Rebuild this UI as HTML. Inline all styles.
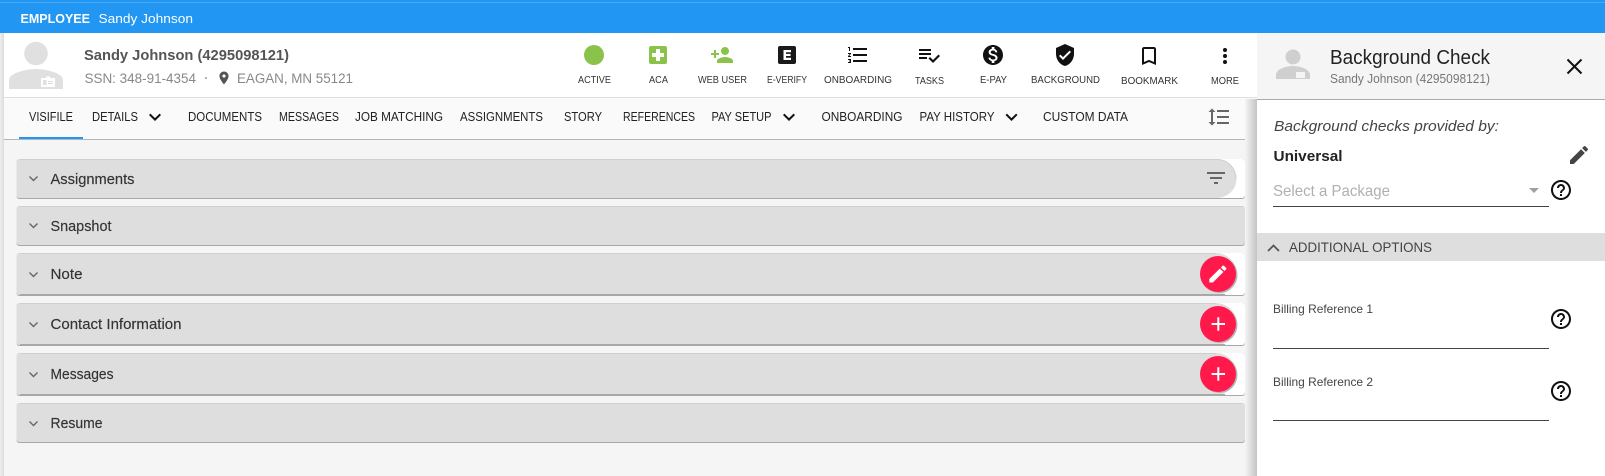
<!DOCTYPE html>
<html lang="en">
<head>
<meta charset="utf-8">
<title>Employee - Sandy Johnson</title>
<style>
html,body{margin:0;padding:0;width:1605px;height:476px;overflow:hidden;background:#f5f5f5}
svg{display:block}
text{font-family:"Liberation Sans",Arial,sans-serif;white-space:pre}
.tab{font-size:12.5px;fill:#222}
.lbl{font-size:10px;fill:#333}
.row{font-size:14.5px;fill:#333;stroke:#333;stroke-width:.15}
.chev{fill:none;stroke:#666;stroke-width:1.4}
</style>
</head>
<body>
<svg width="1605" height="476" viewBox="0 0 1605 476" xmlns="http://www.w3.org/2000/svg">
<defs>
<linearGradient id="sh" x1="0" x2="1" y1="0" y2="0"><stop offset="0" stop-color="#f5f5f5"/><stop offset="1" stop-color="#c4c4c4"/></linearGradient>
<linearGradient id="ls" x1="0" x2="1" y1="0" y2="0"><stop offset="0" stop-color="#eeeeee"/><stop offset="1" stop-color="#dcdcdc"/></linearGradient>
<symbol id="help" viewBox="0 0 24 24" overflow="visible"><path d="M11 18h2v-2h-2v2zm1-16C6.48 2 2 6.48 2 12s4.48 10 10 10 10-4.48 10-10S17.52 2 12 2zm0 18c-4.41 0-8-3.59-8-8s3.59-8 8-8 8 3.59 8 8-3.59 8-8 8zm0-14c-2.21 0-4 1.79-4 4h2c0-1.1.9-2 2-2s2 .9 2 2c0 2-3 1.75-3 5h2c0-2.25 3-2.5 3-5 0-2.21-1.79-4-4-4z"/></symbol>
<symbol id="chevd" viewBox="0 0 24 24"><path d="M16.59 8.59L12 13.17 7.41 8.59 6 10l6 6 6-6z"/></symbol>
</defs>

<!-- base -->
<rect width="1605" height="476" fill="#f5f5f5"/>
<rect x="0" y="33" width="4" height="443" fill="url(#ls)"/>

<!-- top bar -->
<rect width="1605" height="33" fill="#2196f3"/>
<rect y="2" width="1605" height="1" fill="#4aa9f5"/>
<text x="20.5" y="23" font-size="13" font-weight="700" fill="#fff" textLength="69.5" lengthAdjust="spacingAndGlyphs">EMPLOYEE</text>
<text x="98.5" y="23" font-size="13" fill="#fff" textLength="94.5" lengthAdjust="spacingAndGlyphs">Sandy Johnson</text>

<!-- header -->
<rect x="4" y="33" width="1253" height="64" fill="#fff"/>
<rect x="4" y="97" width="1253" height="1" fill="#e0e0e0"/>
<circle cx="36" cy="53.500" r="11.800" fill="#e0e0e0"/>
<path d="M9 89v-8c0-3 1-5 5-7 6-3 14-5 22-5s16 2 22 5c4 2 5 4 5 7v8z" fill="#e0e0e0"/>
<rect x="41" y="78" width="14" height="9" fill="#fff"/>
<rect x="43" y="80" width="3.500" height="5" fill="#e0e0e0"/>
<rect x="48" y="81" width="5" height="1" fill="#e0e0e0"/>
<rect x="48" y="83" width="5" height="1" fill="#e0e0e0"/>
<rect x="46" y="76.500" width="4" height="2" fill="#fff"/>

<text x="84" y="60" font-size="15" font-weight="700" fill="#555" textLength="205" lengthAdjust="spacingAndGlyphs">Sandy Johnson (4295098121)</text>
<text x="84.500" y="83" font-size="13.500" fill="#888" textLength="111.500" lengthAdjust="spacingAndGlyphs">SSN: 348-91-4354</text>
<circle cx="206" cy="78" r="1" fill="#999"/>
<path transform="translate(216.200 70.200) scale(.65)" fill="#555" d="M12 2C8.13 2 5 5.13 5 9c0 5.25 7 13 7 13s7-7.75 7-13c0-3.87-3.13-7-7-7zm0 9.5c-1.38 0-2.5-1.12-2.5-2.5s1.12-2.5 2.5-2.5 2.5 1.12 2.5 2.5-1.12 2.5-2.5 2.5z"/>
<text x="237" y="83" font-size="13.500" fill="#888" textLength="116" lengthAdjust="spacingAndGlyphs">EAGAN, MN 55121</text>

<!-- action icons -->
<circle cx="594" cy="55" r="10" fill="#8bc34a"/>
<text class="lbl" x="578" y="83" textLength="33" lengthAdjust="spacingAndGlyphs">ACTIVE</text>

<rect x="649" y="46" width="18" height="18" rx="2" fill="#8bc34a"/>
<path d="M656 49h4v4h4v4h-4v4h-4v-4h-4v-4h4z" fill="#fff"/>
<text class="lbl" x="649" y="83" textLength="19" lengthAdjust="spacingAndGlyphs">ACA</text>

<path transform="translate(710 43)" fill="#8bc34a" d="M15 12c2.21 0 4-1.79 4-4s-1.79-4-4-4-4 1.79-4 4 1.79 4 4 4zm-9-2V7H4v3H1v2h3v3h2v-3h3v-2H6zm9 4c-2.67 0-8 1.34-8 4v2h16v-2c0-2.66-5.33-4-8-4z"/>
<text class="lbl" x="698" y="83" textLength="49" lengthAdjust="spacingAndGlyphs">WEB USER</text>

<rect x="778" y="46" width="18" height="18" rx="2" fill="#1a1a1a"/>
<path d="M783.500 50h7.500v2.200h-5v1.700h4.500v2.100H786v1.800h5V60h-7.500z" fill="#fff"/>
<text class="lbl" x="767" y="83" textLength="40" lengthAdjust="spacingAndGlyphs">E-VERIFY</text>

<path transform="translate(846 43)" fill="#111" d="M2 17h2v.5H3v1h1v.5H2v1h3v-4H2zm1-9h1V4H2v1h1v3zm-1 3h1.8L2 13.1v.9h3v-1H3.2L5 10.9V10H2v1zm5-6v2h14V5H7zm0 14h14v-2H7v2zm0-6h14v-2H7v2z"/>
<text class="lbl" x="824" y="83" textLength="68" lengthAdjust="spacingAndGlyphs">ONBOARDING</text>

<path transform="translate(917 43)" fill="#111" d="M14 10H2v2h12v-2zm0-4H2v2h12V6zM2 16h8v-2H2v2zm19.500-4.500L23 13l-6.990 7-4.510-4.500L13 14l3.010 3 5.490-5.500z"/>
<text class="lbl" x="915" y="84" textLength="29" lengthAdjust="spacingAndGlyphs">TASKS</text>

<path transform="translate(981 43)" fill="#111" d="M12 2C6.480 2 2 6.480 2 12s4.480 10 10 10 10-4.480 10-10S17.520 2 12 2zm1.410 16.090V20h-2.670v-1.930c-1.710-.36-3.160-1.460-3.270-3.400h1.960c.1 1.050.82 1.870 2.650 1.870 1.960 0 2.400-.98 2.400-1.590 0-.83-.44-1.610-2.670-2.140-2.480-.6-4.180-1.620-4.180-3.670 0-1.720 1.390-2.840 3.110-3.210V4h2.670v1.950c1.860.45 2.790 1.860 2.870 3.390H14.300c-.05-1.110-.64-1.870-2.220-1.870-1.500 0-2.400.68-2.400 1.640 0 .84.65 1.390 2.670 1.910s4.180 1.390 4.180 3.910c-.01 1.830-1.380 2.830-3.120 3.160z"/>
<text class="lbl" x="980" y="83" textLength="27" lengthAdjust="spacingAndGlyphs">E-PAY</text>

<path transform="translate(1053 43)" fill="#111" d="M12 1L3 5v6c0 5.550 3.840 10.740 9 12 5.160-1.260 9-6.450 9-12V5l-9-4zm-2 16l-4-4 1.410-1.410L10 14.170l6.590-6.590L18 9l-8 8z"/>
<text class="lbl" x="1031" y="83" textLength="69" lengthAdjust="spacingAndGlyphs">BACKGROUND</text>

<path transform="translate(1137 44)" fill="#111" d="M17 3H7c-1.100 0-1.990.9-1.990 2L5 21l7-3 7 3V5c0-1.100-.9-2-2-2zm0 15l-5-2.180L7 18V5h10v13z"/>
<text class="lbl" x="1121" y="84" textLength="57" lengthAdjust="spacingAndGlyphs">BOOKMARK</text>

<circle cx="1225" cy="50" r="2" fill="#111"/><circle cx="1225" cy="56" r="2" fill="#111"/><circle cx="1225" cy="62" r="2" fill="#111"/>
<text class="lbl" x="1211" y="84" textLength="28" lengthAdjust="spacingAndGlyphs">MORE</text>

<!-- tab bar -->
<rect x="4" y="98" width="1253" height="41" fill="#fafafa"/>
<rect x="4" y="139" width="1253" height="1" fill="#b5b5b5"/>
<rect x="19" y="137" width="64" height="2" fill="#2196f3"/>
<text class="tab" x="29" y="121" textLength="44" lengthAdjust="spacingAndGlyphs">VISIFILE</text>
<text class="tab" x="92" y="121" textLength="46" lengthAdjust="spacingAndGlyphs">DETAILS</text>
<use href="#chevd" x="143" y="105" width="24" height="24" fill="#111"/>
<text class="tab" x="188" y="121" textLength="74" lengthAdjust="spacingAndGlyphs">DOCUMENTS</text>
<text class="tab" x="279" y="121" textLength="60" lengthAdjust="spacingAndGlyphs">MESSAGES</text>
<text class="tab" x="355" y="121" textLength="88" lengthAdjust="spacingAndGlyphs">JOB MATCHING</text>
<text class="tab" x="460" y="121" textLength="83" lengthAdjust="spacingAndGlyphs">ASSIGNMENTS</text>
<text class="tab" x="564" y="121" textLength="38" lengthAdjust="spacingAndGlyphs">STORY</text>
<text class="tab" x="623" y="121" textLength="72" lengthAdjust="spacingAndGlyphs">REFERENCES</text>
<text class="tab" x="711.500" y="121" textLength="60" lengthAdjust="spacingAndGlyphs">PAY SETUP</text>
<use href="#chevd" x="777" y="105" width="24" height="24" fill="#111"/>
<text class="tab" x="821.500" y="121" textLength="81" lengthAdjust="spacingAndGlyphs">ONBOARDING</text>
<text class="tab" x="919.500" y="121" textLength="75" lengthAdjust="spacingAndGlyphs">PAY HISTORY</text>
<use href="#chevd" x="999.500" y="105" width="24" height="24" fill="#111"/>
<text class="tab" x="1043" y="121" textLength="85" lengthAdjust="spacingAndGlyphs">CUSTOM DATA</text>
<path transform="translate(1207 105)" fill="#666" d="M6 7h2.500L5 3.500 1.500 7H4v10H1.500L5 20.500 8.500 17H6V7zm4-2v2h12V5H10zm0 14h12v-2H10v2zm0-6h12v-2H10v2z"/>

<!-- accordion rows -->
<g>
<rect x="16.500" y="159" width="1228.500" height="40" rx="3" fill="#a8a8a8"/>
<rect x="16.500" y="159" width="1228.500" height="39" rx="3" fill="#fff"/>
<path d="M19.500 159H1217a19.500 19.500 0 0 1 0 39H19.500a3 3 0 0 1-3-3V162a3 3 0 0 1 3-3z" fill="#dedede"/>
<path d="M20 159.500H1217a19 19 0 0 1 19 19" fill="none" stroke="#cfcfcf"/>

<rect x="16.500" y="206" width="1228.500" height="40" rx="3" fill="#a8a8a8"/>
<rect x="16.500" y="206" width="1228.500" height="39" rx="3" fill="#dedede"/>
<rect x="20" y="206" width="1222" height="1" fill="#cfcfcf"/>

<rect x="16.500" y="253" width="1228.500" height="43" rx="3" fill="#a8a8a8"/>
<rect x="16.500" y="253" width="1228.500" height="42" rx="3" fill="#fff"/>
<path d="M19.500 253H1216a21 21 0 0 1 0 42H19.500a3 3 0 0 1-3-3V256a3 3 0 0 1 3-3z" fill="#dedede"/>
<rect x="20" y="294" width="1205" height="1" fill="#a8a8a8"/>
<rect x="20" y="253" width="1196" height="1" fill="#cfcfcf"/>

<rect x="16.500" y="303" width="1228.500" height="43" rx="3" fill="#a8a8a8"/>
<rect x="16.500" y="303" width="1228.500" height="42" rx="3" fill="#fff"/>
<path d="M19.500 303H1216a21 21 0 0 1 0 42H19.500a3 3 0 0 1-3-3V306a3 3 0 0 1 3-3z" fill="#dedede"/>
<rect x="20" y="344" width="1205" height="1" fill="#a8a8a8"/>
<rect x="20" y="303" width="1196" height="1" fill="#cfcfcf"/>

<rect x="16.500" y="353" width="1228.500" height="43" rx="3" fill="#a8a8a8"/>
<rect x="16.500" y="353" width="1228.500" height="42" rx="3" fill="#fff"/>
<path d="M19.500 353H1216a21 21 0 0 1 0 42H19.500a3 3 0 0 1-3-3V356a3 3 0 0 1 3-3z" fill="#dedede"/>
<rect x="20" y="394" width="1205" height="1" fill="#a8a8a8"/>
<rect x="20" y="353" width="1196" height="1" fill="#cfcfcf"/>

<rect x="16.500" y="403" width="1228.500" height="40" rx="3" fill="#a8a8a8"/>
<rect x="16.500" y="403" width="1228.500" height="39" rx="3" fill="#dedede"/>
<rect x="20" y="403" width="1222" height="1" fill="#cfcfcf"/>
</g>

<polyline class="chev" points="29.500,176.500 33.500,180.500 37.500,176.500"/>
<polyline class="chev" points="29.500,223.500 33.500,227.500 37.500,223.500"/>
<polyline class="chev" points="29.500,272.500 33.500,276.500 37.500,272.500"/>
<polyline class="chev" points="29.500,322.500 33.500,326.500 37.500,322.500"/>
<polyline class="chev" points="29.500,372.500 33.500,376.500 37.500,372.500"/>
<polyline class="chev" points="29.500,421.500 33.500,425.500 37.500,421.500"/>

<text class="row" x="50.500" y="184" textLength="84" lengthAdjust="spacingAndGlyphs">Assignments</text>
<text class="row" x="50.500" y="231" textLength="61" lengthAdjust="spacingAndGlyphs">Snapshot</text>
<text class="row" x="50.500" y="279" textLength="32" lengthAdjust="spacingAndGlyphs">Note</text>
<text class="row" x="50.500" y="329" textLength="131" lengthAdjust="spacingAndGlyphs">Contact Information</text>
<text class="row" x="50.500" y="379" textLength="63" lengthAdjust="spacingAndGlyphs">Messages</text>
<text class="row" x="50.500" y="428" textLength="52" lengthAdjust="spacingAndGlyphs">Resume</text>

<path transform="translate(1204 166)" fill="#666" d="M10 18h4v-2h-4v2zM3 6v2h18V6H3zm3 7h12v-2H6v2z"/>

<!-- FABs -->
<circle cx="1219.500" cy="275" r="18" fill="#b4b4b4"/>
<circle cx="1219.500" cy="325" r="18" fill="#b4b4b4"/>
<circle cx="1219.500" cy="375" r="18" fill="#b4b4b4"/>
<circle cx="1218" cy="274" r="18" fill="#ff1a4b"/>
<circle cx="1218" cy="324" r="18" fill="#ff1a4b"/>
<circle cx="1218" cy="374" r="18" fill="#ff1a4b"/>
<path transform="translate(1206.500 262.600) scale(.95)" fill="#fff" d="M3 17.250V21h3.750L17.810 9.940l-3.750-3.750L3 17.250zM20.710 7.040c.39-.39.39-1.020 0-1.410l-2.340-2.340c-.39-.39-1.020-.39-1.410 0l-1.830 1.830 3.750 3.750 1.830-1.830z"/>
<path d="M1217.300 317.300h2v5.700h5.700v2h-5.700v5.700h-2V325h-5.700v-2h5.700z" fill="#fff"/>
<path d="M1217.300 367.300h2v5.700h5.700v2h-5.700v5.700h-2V375h-5.700v-2h5.700z" fill="#fff"/>

<!-- right panel -->
<rect x="1245" y="99" width="12" height="377" fill="url(#sh)"/>
<rect x="1257" y="33" width="348" height="443" fill="#fff"/>
<rect x="1257" y="33" width="348" height="66" fill="#f5f5f5"/>
<rect x="1257" y="99" width="348" height="1" fill="#aaaaaa"/>
<circle cx="1293" cy="57" r="7.500" fill="#cfcfcf"/>
<path d="M1276 79v-4c0-6 10-9 17-9s17 3 17 9v4z" fill="#cfcfcf"/>
<rect x="1296" y="72" width="9" height="6" fill="#f5f5f5"/>
<text x="1330" y="64" font-size="20" fill="#222" textLength="160" lengthAdjust="spacingAndGlyphs">Background Check</text>
<text x="1330" y="83" font-size="12.500" fill="#777" textLength="160" lengthAdjust="spacingAndGlyphs">Sandy Johnson (4295098121)</text>
<path d="M1567.500 59.500l14 14m0-14l-14 14" stroke="#111" stroke-width="2" fill="none"/>

<text x="1274" y="131" font-size="15" font-style="italic" fill="#444" textLength="225" lengthAdjust="spacingAndGlyphs">Background checks provided by:</text>
<text x="1273.500" y="161" font-size="14.500" font-weight="700" fill="#222" textLength="69" lengthAdjust="spacingAndGlyphs">Universal</text>
<path transform="translate(1567 143)" fill="#444" d="M3 17.250V21h3.750L17.810 9.940l-3.750-3.750L3 17.250zM20.710 7.040c.39-.39.39-1.020 0-1.410l-2.340-2.340c-.39-.39-1.020-.39-1.410 0l-1.830 1.830 3.750 3.750 1.830-1.830z"/>
<text x="1273" y="196" font-size="16" fill="#b0b0b0" textLength="117" lengthAdjust="spacingAndGlyphs">Select a Package</text>
<path d="M1529 188h10l-5 5z" fill="#a0a0a0"/>
<rect x="1273" y="206" width="276" height="1" fill="#444"/>
<use href="#help" x="1549" y="178" width="24" height="24" fill="#111"/>

<rect x="1257" y="233" width="348" height="28" fill="#dedede"/>
<path d="M1268 251l5.500-5.500 5.500 5.500" fill="none" stroke="#555" stroke-width="1.800"/>
<text x="1289" y="252" font-size="14" fill="#444" textLength="143" lengthAdjust="spacingAndGlyphs">ADDITIONAL OPTIONS</text>

<text x="1273" y="313" font-size="12" fill="#444" textLength="100" lengthAdjust="spacingAndGlyphs">Billing Reference 1</text>
<rect x="1273" y="348" width="276" height="1" fill="#444"/>
<use href="#help" x="1549" y="307" width="24" height="24" fill="#111"/>
<text x="1273" y="386" font-size="12" fill="#444" textLength="100" lengthAdjust="spacingAndGlyphs">Billing Reference 2</text>
<rect x="1273" y="420" width="276" height="1" fill="#444"/>
<use href="#help" x="1549" y="379" width="24" height="24" fill="#111"/>
</svg>
</body>
</html>
